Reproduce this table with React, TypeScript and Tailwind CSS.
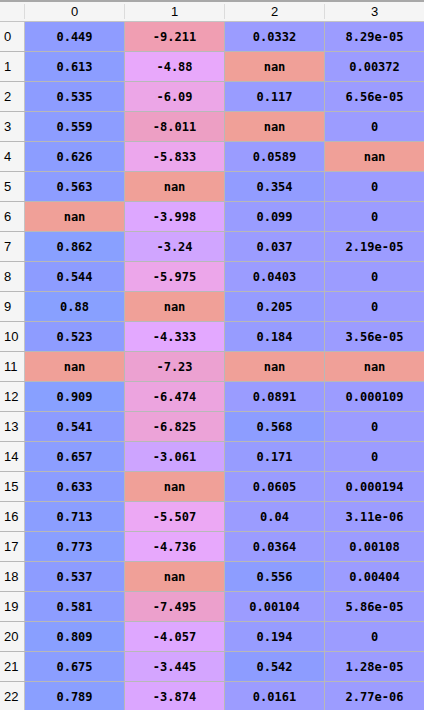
const rows: string[][] = [
  ["0.449", "-9.211", "0.0332", "8.29e-05"],
  ["0.613", "-4.88", "nan", "0.00372"],
  ["0.535", "-6.09", "0.117", "6.56e-05"],
  ["0.559", "-8.011", "nan", "0"],
  ["0.626", "-5.833", "0.0589", "nan"],
  ["0.563", "nan", "0.354", "0"],
  ["nan", "-3.998", "0.099", "0"],
  ["0.862", "-3.24", "0.037", "2.19e-05"],
  ["0.544", "-5.975", "0.0403", "0"],
  ["0.88", "nan", "0.205", "0"],
  ["0.523", "-4.333", "0.184", "3.56e-05"],
  ["nan", "-7.23", "nan", "nan"],
  ["0.909", "-6.474", "0.0891", "0.000109"],
  ["0.541", "-6.825", "0.568", "0"],
  ["0.657", "-3.061", "0.171", "0"],
  ["0.633", "nan", "0.0605", "0.000194"],
  ["0.713", "-5.507", "0.04", "3.11e-06"],
  ["0.773", "-4.736", "0.0364", "0.00108"],
  ["0.537", "nan", "0.556", "0.00404"],
  ["0.581", "-7.495", "0.00104", "5.86e-05"],
  ["0.809", "-4.057", "0.194", "0"],
  ["0.675", "-3.445", "0.542", "1.28e-05"],
  ["0.789", "-3.874", "0.0161", "2.77e-06"],
];

// value -> colour stops, highest first
const stops: [number, number[]][] = [
  [0.9, [136, 160, 255]],
  [0.5, [142, 156, 255]],
  [0, [156, 156, 255]],
  [-3, [204, 164, 255]],
  [-4.5, [230, 168, 255]],
  [-5.5, [236, 168, 244]],
  [-6.5, [236, 164, 222]],
  [-7.5, [236, 160, 204]],
  [-9.2, [240, 158, 178]],
];

function cellColor(text: string) {
  if (text === "nan") return "rgb(240,160,152)";
  const v = parseFloat(text);
  if (v >= stops[0][0]) return `rgb(${stops[0][1].join(",")})`;
  for (let i = 0; i < stops.length - 1; i++) {
    const [hi, a] = stops[i];
    const [lo, b] = stops[i + 1];
    if (v <= hi && v >= lo) {
      const t = (hi - v) / (hi - lo);
      const c = a.map((x, k) => Math.round(x + (b[k] - x) * t));
      return `rgb(${c.join(",")})`;
    }
  }
  return `rgb(${stops[stops.length - 1][1].join(",")})`;
}

export default function App() {
  return (
    <div className="w-[424px] h-[710px] overflow-hidden bg-white font-['Liberation_Sans',Arial,sans-serif] text-[13px] text-black">
      <div className="w-[425px] border-t-2 border-[#a8a8a8] bg-[#f5f5f5]">
        <div className="flex items-center h-[19px]">
          <div className="w-[25px] h-[15px] border-r border-[#dcdcdc]" />
          {["0", "1", "2", "3"].map((h) => (
            <div
              key={h}
              className="w-[100px] h-[15px] border-r border-[#dcdcdc] flex items-center justify-center"
            >
              {h}
            </div>
          ))}
        </div>
      </div>
      <div className="w-[425px] border-t border-[#c4c4c4]">
        {rows.map((row, i) => (
          <div key={i} className="flex h-[30px] border-b border-[#b8b8b8]">
            <div className="w-[25px] shrink-0 bg-[#f5f5f5] border-r border-[#c4c4c4] flex items-center pl-[4px]">
              {i}
            </div>
            {row.map((cell, j) => (
              <div
                key={j}
                className="w-[100px] shrink-0 border-r border-[#b8b8b8] flex items-center justify-center font-['DejaVu_Sans_Mono',monospace] font-bold text-[12px]"
                style={{ backgroundColor: cellColor(cell) }}
              >
                {cell}
              </div>
            ))}
          </div>
        ))}
      </div>
    </div>
  );
}
